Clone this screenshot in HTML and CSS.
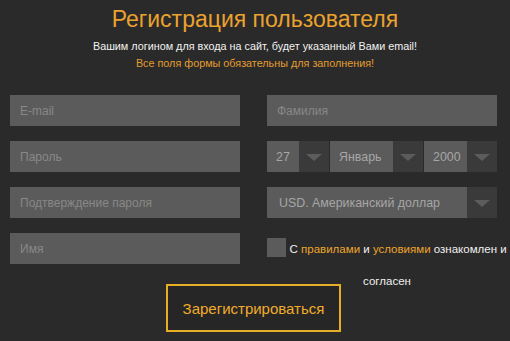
FILE: index.html
```html
<!DOCTYPE html>
<html lang="ru">
  <head>
    <meta charset="utf-8" />
    <title>Регистрация пользователя</title>
    <link rel="stylesheet" href="styles.css">
  </head>

  <body>
    <h1 class="title">Регистрация пользователя</h1>
    <p class="note">Вашим логином для входа на сайт, будет указанный Вами email!</p>
    <p class="note note-warn">Все поля формы обязательны для заполнения!</p>

    <form class="reg-form">
      <input class="field" type="text" placeholder="E-mail">
      <input class="field" type="text" placeholder="Фамилия">

      <input class="field" type="password" placeholder="Пароль">
      <div class="select-row">
        <div class="select select-day">
          <span class="select-value">27</span>
          <span class="select-arrow"></span>
        </div>
        <div class="select select-month">
          <span class="select-value">Январь</span>
          <span class="select-arrow"></span>
        </div>
        <div class="select select-year">
          <span class="select-value">2000</span>
          <span class="select-arrow"></span>
        </div>
      </div>

      <input class="field" type="password" placeholder="Подтверждение пароля">
      <div class="select-row">
        <div class="select select-currency">
          <span class="select-value">USD. Американский доллар</span>
          <span class="select-arrow"></span>
        </div>
      </div>

      <input class="field" type="text" placeholder="Имя">
      <label class="agree">
        <span class="checkbox"></span>
        С <a href="#">правилами</a> и <a href="#">условиями</a> ознакомлен и согласен
      </label>

      <button type="submit" class="submit">Зарегистрироваться</button>
    </form>
  </body>
</html>
```

FILE: styles.css
```css
body {
  margin: 0;
  background-color: #2a2a2a;
  font-family: "Liberation Sans", Arial, sans-serif;
  color: #eee;
}

.title {
  margin: 5px 0 0;
  font-size: 23px;
  line-height: 28px;
  font-weight: normal;
  text-align: center;
  color: #eba22e;
}

.note {
  margin: 5px 0 0;
  font-size: 10.8px;
  line-height: 17px;
  text-align: center;
  color: #f2f2f2;
}

.note-warn {
  margin-top: 0;
  color: #e29d30;
}

.reg-form {
  display: grid;
  grid-template-columns: 230px 230px;
  grid-template-rows: repeat(4, 31px) 53px;
  column-gap: 27px;
  row-gap: 15px;
  margin-top: 23px;
  padding-left: 10px;
}

.field {
  box-sizing: border-box;
  width: 100%;
  height: 31px;
  margin: 0;
  padding: 0 10px;
  border: none;
  background-color: #5b5b5b;
  font-family: inherit;
  font-size: 12px;
  color: #ddd;
  outline: none;
}

.field::placeholder {
  color: #888;
}

.select-row {
  display: flex;
  gap: 1px;
}

.select {
  display: flex;
  height: 31px;
}

.select-value {
  display: flex;
  align-items: center;
  padding-left: 9px;
  background-color: #5b5b5b;
  font-size: 12.4px;
  color: #a6a6a6;
}

.select-day .select-value { width: 23px; }
.select-month .select-value { width: 54px; }
.select-year .select-value { width: 34px; }
.select-currency .select-value { width: 188px; padding-left: 12px; }

.select-arrow {
  position: relative;
  width: 30px;
  background-color: #3a3a3a;
}

.select-arrow::after {
  content: "";
  position: absolute;
  left: 7px;
  top: 13px;
  border-left: 8px solid transparent;
  border-right: 8px solid transparent;
  border-top: 7px solid #5c5c5c;
}

.agree {
  grid-column: 2;
  grid-row: 4 / 6;
  width: 240px;
  font-size: 11.5px;
  line-height: 32px;
  text-align: center;
  color: #f0f0f0;
}

.agree a {
  color: #eda52c;
  text-decoration: none;
}

.checkbox {
  display: inline-block;
  width: 19px;
  height: 19px;
  vertical-align: -4px;
  background-color: #5b5b5b;
}

.submit {
  grid-column: 1 / 3;
  grid-row: 5;
  justify-self: center;
  align-self: end;
  box-sizing: border-box;
  width: 175px;
  height: 48px;
  border: 2px solid #e7ae25;
  background-color: #262626;
  font-family: inherit;
  font-size: 15px;
  color: #f2ac2b;
  cursor: pointer;
}
```
